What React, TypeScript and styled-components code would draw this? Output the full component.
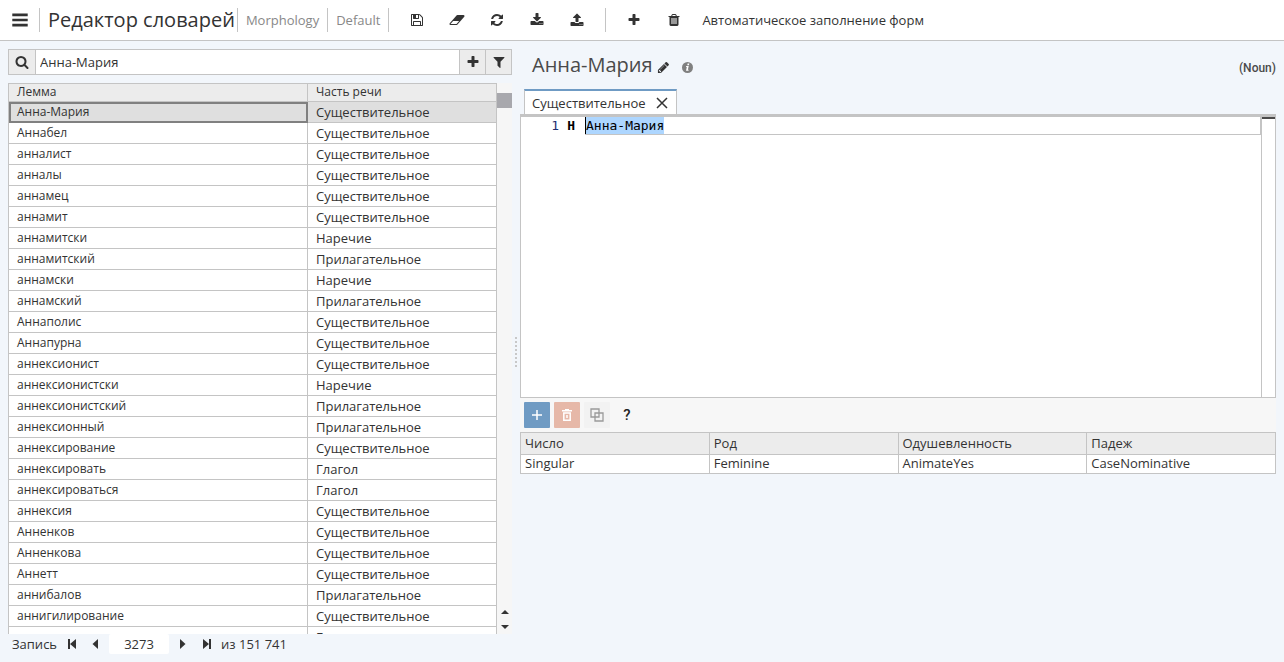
import React, { useState } from 'react';
import styled, { createGlobalStyle, css } from 'styled-components';

const line = '#c4c4c4';
const ink = '#333333';
const page = '#f2f6fb';
const mono = '"DejaVu Sans Mono", "Liberation Mono", monospace';

const GlobalStyle = createGlobalStyle`
  *, *::before, *::after { box-sizing: border-box; }
  body {
    margin: 0;
    background: ${page};
    color: ${ink};
    font-family: "Open Sans", "Liberation Sans", sans-serif;
    font-size: 13px;
    line-height: 18px;
  }
  button, input { font: inherit; color: inherit; }
  button { padding: 0; border: 0; background: none; cursor: pointer; }
`;

const icons = {
  bars: 'M128 1280h1536v256H128zM128 768h1536v256H128zM128 256h1536v256H128z',
  save: 'M512 1536h768v-384h-768v384zm896 0h128v-896q0-14-10-38.5t-20-34.5l-281-281q-10-10-34-20t-39-10v416q0 40-28 68t-68 28h-576q-40 0-68-28t-28-68v-416h-128v1280h128v-416q0-40 28-68t68-28h832q40 0 68 28t28 68v416zm-384-928v-320q0-13-9.5-22.5t-22.5-9.5h-192q-13 0-22.5 9.5t-9.5 22.5v320q0 13 9.5 22.5t22.5 9.5h192q13 0 22.5-9.5t9.5-22.5zm640 32v928q0 40-28 68t-68 28h-1344q-40 0-68-28t-28-68v-1344q0-40 28-68t68-28h928q40 0 88 20t76 48l280 280q28 28 48 76t20 88z',
  eraser: 'M960 1408l336-384h-768l-336 384h768zm1013-1077q15 34 9.5 71.5t-30.5 65.5l-896 1024q-38 44-96 44h-768q-38 0-69.5-20.5t-47.5-54.5q-15-34-9.5-71.5t30.5-65.5l896-1024q38-44 96-44h768q38 0 69.5 20.5t47.5 54.5z',
  refresh: 'M1639 1056q0 5-1 7-64 268-268 434.5t-478 166.5q-146 0-282.5-55t-243.5-157l-129 129q-19 19-45 19t-45-19-19-45v-448q0-26 19-45t45-19h448q26 0 45 19t19 45-19 45l-137 137q71 66 161 102t187 36q134 0 250-65t186-179q11-17 53-117 8-23 30-23h192q13 0 22.5 9.5t9.5 22.5zm25-800v448q0 26-19 45t-45 19h-448q-26 0-45-19t-19-45 19-45l138-138q-148-137-349-137-134 0-250 65t-186 179q-11 17-53 117-8 23-30 23h-199q-13 0-22.5-9.5t-9.5-22.5v-7q65-268 270-434.5t480-166.5q146 0 284 55.5t245 156.5l130-129q19-19 45-19t45 19 19 45z',
  download: 'M1344 1344q0-26-19-45t-45-19-45 19-19 45 19 45 45 19 45-19 19-45zm256 0q0-26-19-45t-45-19-45 19-19 45 19 45 45 19 45-19 19-45zm128-224v320q0 40-28 68t-68 28h-1472q-40 0-68-28t-28-68v-320q0-40 28-68t68-28h465l135 136q58 56 136 56t136-56l136-136h464q40 0 68 28t28 68zm-325-569q17 41-14 70l-448 448q-18 19-45 19t-45-19l-448-448q-31-29-14-70 17-39 59-39h256v-448q0-26 19-45t45-19h256q26 0 45 19t19 45v448h256q42 0 59 39z',
  upload: 'M1344 1472q0-26-19-45t-45-19-45 19-19 45 19 45 45 19 45-19 19-45zm256 0q0-26-19-45t-45-19-45 19-19 45 19 45 45 19 45-19 19-45zm128-224v320q0 40-28 68t-68 28h-1472q-40 0-68-28t-28-68v-320q0-40 28-68t68-28h427q21 56 70.5 92t110.5 36h256q61 0 110.5-36t70.5-92h427q40 0 68 28t28 68zm-325-648q-17 40-59 40h-256v448q0 26-19 45t-45 19h-256q-26 0-45-19t-19-45v-448h-256q-42 0-59-40-17-39 14-69l448-448q18-19 45-19t45 19l448 448q31 30 14 69z',
  plus: 'M1600 736v192q0 40-28 68t-68 28h-416v416q0 40-28 68t-68 28h-192q-40 0-68-28t-28-68v-416h-416q-40 0-68-28t-28-68v-192q0-40 28-68t68-28h416v-416q0-40 28-68t68-28h192q40 0 68 28t28 68v416h416q40 0 68 28t28 68z',
  trash: 'M704 1376v-704q0-14-9-23t-23-9h-64q-14 0-23 9t-9 23v704q0 14 9 23t23 9h64q14 0 23-9t9-23zm256 0v-704q0-14-9-23t-23-9h-64q-14 0-23 9t-9 23v704q0 14 9 23t23 9h64q14 0 23-9t9-23zm256 0v-704q0-14-9-23t-23-9h-64q-14 0-23 9t-9 23v704q0 14 9 23t23 9h64q14 0 23-9t9-23zm-544-992h448l-48-117q-7-9-17-11h-317q-10 2-17 11zm928 32v64q0 14-9 23t-23 9h-96v948q0 83-47 143.5t-113 60.5h-832q-66 0-113-58.5t-47-141.5v-952h-96q-14 0-23-9t-9-23v-64q0-14 9-23t23-9h309l70-167q15-37 54-63t79-26h320q40 0 79 26t54 63l70 167h309q14 0 23 9t9 23z',
  search: 'M1216 832q0-185-131.5-316.5t-316.5-131.5-316.5 131.5-131.5 316.5 131.5 316.5 316.5 131.5 316.5-131.5 131.5-316.5zm512 832q0 52-38 90t-90 38q-54 0-90-38l-343-342q-179 124-399 124-143 0-273.5-55.5t-225-150-150-225-55.5-273.5 55.5-273.5 150-225 225-150 273.5-55.5 273.5 55.5 225 150 150 225 55.5 273.5q0 220-124 399l343 343q37 37 37 90z',
  filter: 'M1595 295q17 41-14 70l-493 493v742q0 42-39 59-13 5-25 5-27 0-45-19l-256-256q-19-19-19-45v-486l-493-493q-31-29-14-70 17-39 59-39h1280q42 0 59 39z',
  pencil: 'M491 1536l91-91-235-235-91 91v107h128v128h107zm523-928q0-22-22-22-10 0-17 7l-542 542q-7 7-7 17 0 22 22 22 10 0 17-7l542-542q7-7 7-17zm-54-192l416 416-832 832h-416v-416zm683 96q0 53-37 90l-166 166-416-416 166-165q36-38 90-38 53 0 91 38l235 234q37 39 37 91z',
  first: 'M384 256h256v640l768-640v1280l-768-640v640h-256z',
  prev: 'M1024 256v1280l-704-640z',
  next: 'M640 256v1280l704-640z',
  last: 'M1408 256h-256v640l-768-640v1280l768-640v640h256z',
} as const;

type IconName = keyof typeof icons;

const Glyph = styled.svg`
  display: block;
  flex: none;
  fill: currentColor;
`;

function Icon({ name, size = 14 }: { name: IconName; size?: number }) {
  const wide = name === 'eraser';
  return (
    <Glyph
      width={wide ? size + 2 : size}
      height={size}
      viewBox={wide ? '0 0 2048 1792' : '0 0 1792 1792'}
      aria-hidden="true"
    >
      <path d={icons[name]} />
    </Glyph>
  );
}

const Shell = styled.div`
  display: flex;
  flex-direction: column;
  height: 100vh;
`;

const TopBar = styled.header`
  display: flex;
  align-items: center;
  flex: none;
  height: 41px;
  background: #ffffff;
  border-bottom: 1px solid ${line};
`;

const MenuButton = styled.button`
  display: flex;
  align-items: center;
  justify-content: center;
  width: 39px;
  height: 40px;

  svg { width: 18px; height: 18px; }
`;

const Crumb = styled.div<{ $main?: boolean }>`
  height: 24px;
  padding: 0 ${(p) => (p.$main ? 2 : 8)}px 0 8px;
  border-left: 1px solid ${line};
  color: ${(p) => (p.$main ? ink : '#888888')};
  font-size: ${(p) => (p.$main ? 20 : 13)}px;
  line-height: 24px;
  white-space: nowrap;
`;

const AppTitle = styled.h1`
  margin: 0;
  font: inherit;
`;

const Tools = styled.div`
  display: flex;
  align-items: center;
  height: 24px;
  border-left: 1px solid ${line};
`;

const ToolButton = styled.button`
  display: flex;
  align-items: center;
  justify-content: center;
  width: 40px;
  height: 24px;
`;

const ToolGroup = styled.div<{ $first?: boolean }>`
  display: flex;
  align-items: center;
  padding: 0 8px;
  height: 24px;
  ${(p) => !p.$first && css`border-left: 1px solid ${line};`}
`;

const TextButton = styled.button`
  padding: 0 8px;
  white-space: nowrap;
`;

const Workspace = styled.main`
  display: grid;
  grid-template-columns: minmax(0, 2fr) 8px minmax(0, 3fr);
  flex: 1;
  min-height: 0;
  padding: 0 8px;
`;

const LeftPane = styled.section`
  display: flex;
  flex-direction: column;
  min-height: 0;
  padding: 8px 0;
`;

const SearchBar = styled.div`
  display: flex;
  flex: none;
  height: 26px;
  border: 1px solid ${line};
  background: #ffffff;
`;

const SearchInput = styled.input`
  flex: 1;
  min-width: 0;
  padding: 0 4px;
  border: 0;
  outline: 0;
  background: transparent;
`;

const SearchButton = styled.button<{ $side: 'left' | 'right' }>`
  display: flex;
  align-items: center;
  justify-content: center;
  width: ${(p) => (p.$side === 'left' ? 27 : 26)}px;
  background: #ececec;
  border-${(p) => (p.$side === 'left' ? 'right' : 'left')}: 1px solid ${line};
`;

const ListArea = styled.div`
  display: flex;
  flex: 1;
  min-height: 0;
  margin-top: 8px;
  overflow: hidden;
`;

const ListClip = styled.div`
  flex: 1;
  min-width: 0;
  overflow: hidden;
  border-left: 1px solid ${line};
  border-top: 1px solid ${line};
`;

const LemmaTable = styled.table`
  width: 100%;
  table-layout: fixed;
  border-collapse: separate;
  border-spacing: 0;
`;

const HeadCell = styled.th`
  height: 18px;
  padding: 0 8px;
  background: #ececec;
  border-right: 1px solid ${line};
  border-bottom: 1px solid ${line};
  font-size: 12px;
  font-weight: 400;
  line-height: 15px;
  text-align: left;
  vertical-align: top;

  &:first-child { width: 299px; }
`;

const Cell = styled.td<{ $selected?: boolean; $lemma?: boolean }>`
  height: 21px;
  padding: 0 8px;
  background: ${(p) => (p.$selected ? '#dfdfdf' : '#ffffff')};
  border-right: 1px solid ${line};
  border-bottom: 1px solid ${line};
  font-size: ${(p) => (p.$lemma ? 12 : 13)}px;
  line-height: 20px;
  vertical-align: top;
  white-space: nowrap;
  ${(p) => p.$selected && p.$lemma && css`
    outline: 2px solid #808080;
    outline-offset: -2px;
  `}
`;

const ScrollTrack = styled.div`
  display: flex;
  flex-direction: column;
  align-items: center;
  flex: none;
  width: 15px;
  padding-top: 10px;
  background: #f6f6f6;
`;

const ScrollThumb = styled.div`
  width: 15px;
  height: 15px;
  margin-bottom: auto;
  background: #a8a8ad;
`;

const ScrollButton = styled.button`
  display: flex;
  align-items: center;
  justify-content: center;
  width: 15px;
  height: 15px;
`;

const Pager = styled.div`
  display: flex;
  align-items: center;
  flex: none;
  height: 20px;
  padding-left: 4px;
`;

const PagerLabel = styled.label`
  padding-right: 2px;
`;

const PagerButton = styled.button`
  display: flex;
  align-items: center;
  justify-content: center;
  width: 25px;
  height: 20px;
`;

const PagerInput = styled.input`
  width: 60px;
  height: 20px;
  padding: 0;
  border: 0;
  border-radius: 2px;
  background: #ffffff;
  text-align: center;
`;

const PagerTotal = styled.span`
  padding-left: 2px;
`;

const Splitter = styled.div`
  display: flex;
  flex-direction: column;
  align-items: center;
  justify-content: center;
  gap: 2px;
`;

const Dot = styled.i`
  width: 2px;
  height: 2px;
  background: #c8c8c8;
`;

const RightPane = styled.section`
  display: flex;
  flex-direction: column;
  min-width: 0;
`;

const EntryHead = styled.div`
  display: flex;
  align-items: center;
  height: 48px;
  padding-left: 12px;
`;

const EntryTitle = styled.h2`
  margin: 0 4px 0 0;
  color: #4a4a4a;
  font-size: 20px;
  font-weight: 400;
  line-height: 28px;
`;

const HeadIcon = styled.button`
  display: flex;
  margin-right: 12px;
  padding-top: 4px;
`;

const PartOfSpeech = styled.span`
  margin-left: auto;
  padding-top: 6px;
  color: #4a4a4a;
  font-family: Roboto, "Liberation Sans", sans-serif;
  font-size: 12px;
  font-weight: 500;
`;

const TabStrip = styled.div`
  display: flex;
  height: 25px;
  padding-left: 4px;
`;

const Tab = styled.div`
  display: flex;
  align-items: center;
  padding: 0 8px 0 7px;
  gap: 10px;
  background: #ffffff;
  border: 1px solid ${line};
  border-top: 2px solid #6f9bc4;
  border-bottom: 0;
`;

const TabLabel = styled.button`
  white-space: nowrap;
`;

const Editor = styled.div`
  display: flex;
  height: 284px;
  background: #ffffff;
  border: 1px solid ${line};
  border-top-width: 3px;
`;

const Gutter = styled.div`
  flex: none;
  width: 64px;
  padding-right: 10px;
  color: #1f2f6f;
  font-family: ${mono};
  line-height: 18px;
  text-align: right;
  white-space: pre;
`;

const GutterMark = styled.b`
  padding-left: 8px;
  color: #000000;
`;

const CodeArea = styled.div`
  flex: 1;
  min-width: 0;
`;

const CodeLine = styled.div`
  display: flex;
  height: 18px;
  border: 1px solid ${line};
  border-top: 0;
`;

const CodeInput = styled.input`
  height: 17px;
  padding: 0;
  border: 0;
  outline: 0;
  background: #add6ff;
  box-shadow: -1px 0 0 #000000;
  color: #000000;
  font-family: ${mono};
`;

const OverviewRuler = styled.div`
  flex: none;
  width: 14px;
  border-left: 1px solid ${line};

  &::before {
    content: "";
    display: block;
    height: 2px;
    background: #4a4a4a;
  }
`;

const FormTools = styled.div`
  display: flex;
  align-items: center;
  gap: 4px;
  height: 34px;
  padding-left: 4px;
  background: #f7f7f7;
`;

const FormButton = styled.button<{ $tone: 'add' | 'remove' | 'copy' | 'help' }>`
  display: flex;
  align-items: center;
  justify-content: center;
  width: 26px;
  height: 26px;
  border-radius: 1px;
  font-family: Roboto, "Liberation Sans", sans-serif;
  font-size: 15px;
  font-weight: 500;
  background: ${(p) => ({ add: '#709bc3', remove: '#e6b8a8', copy: '#f2f2f2', help: 'transparent' })[p.$tone]};
  color: ${(p) => ({ add: '#ffffff', remove: '#ffffff', copy: '#9a9a9a', help: '#222222' })[p.$tone]};
`;

const Stroke = styled.svg`
  display: block;
  fill: none;
  stroke: currentColor;
`;

const FormTable = styled.table`
  width: 100%;
  table-layout: fixed;
  border-collapse: collapse;
  background: #ffffff;
  line-height: 16px;
`;

const FormHead = styled.th`
  height: 22px;
  padding: 0 4px 2px;
  background: #ececec;
  border: 1px solid ${line};
  font-weight: 400;
  text-align: left;
`;

const FormCell = styled.td`
  height: 19px;
  padding: 0 4px 2px;
  border: 1px solid ${line};
`;

const noun = 'Существительное';
const adjective = 'Прилагательное';
const adverb = 'Наречие';
const verb = 'Глагол';

const lemmas: [string, string][] = [
  ['Анна-Мария', noun],
  ['Аннабел', noun],
  ['анналист', noun],
  ['анналы', noun],
  ['аннамец', noun],
  ['аннамит', noun],
  ['аннамитски', adverb],
  ['аннамитский', adjective],
  ['аннамски', adverb],
  ['аннамский', adjective],
  ['Аннаполис', noun],
  ['Аннапурна', noun],
  ['аннексионист', noun],
  ['аннексионистски', adverb],
  ['аннексионистский', adjective],
  ['аннексионный', adjective],
  ['аннексирование', noun],
  ['аннексировать', verb],
  ['аннексироваться', verb],
  ['аннексия', noun],
  ['Анненков', noun],
  ['Анненкова', noun],
  ['Аннетт', noun],
  ['аннибалов', adjective],
  ['аннигилирование', noun],
  ['', verb],
];

const fileTools: { icon: IconName; label: string }[] = [
  { icon: 'save', label: 'Сохранить' },
  { icon: 'eraser', label: 'Очистить' },
  { icon: 'refresh', label: 'Обновить' },
  { icon: 'download', label: 'Импорт' },
  { icon: 'upload', label: 'Экспорт' },
];

const forms = [
  { head: 'Число', value: 'Singular' },
  { head: 'Род', value: 'Feminine' },
  { head: 'Одушевленность', value: 'AnimateYes' },
  { head: 'Падеж', value: 'CaseNominative' },
];

export default function App() {
  const [query, setQuery] = useState('Анна-Мария');
  const [record, setRecord] = useState('3273');
  const [code, setCode] = useState('Анна-Мария');

  return (
    <Shell>
      <GlobalStyle />
      <TopBar>
        <MenuButton aria-label="Меню"><Icon name="bars" /></MenuButton>
        <Crumb $main><AppTitle>Редактор словарей</AppTitle></Crumb>
        <Crumb>Morphology</Crumb>
        <Crumb>Default</Crumb>
        <Tools>
          <ToolGroup $first>
            {fileTools.map((tool) => (
              <ToolButton key={tool.icon} aria-label={tool.label}><Icon name={tool.icon} /></ToolButton>
            ))}
          </ToolGroup>
          <ToolGroup>
            <ToolButton aria-label="Добавить"><Icon name="plus" /></ToolButton>
            <ToolButton aria-label="Удалить"><Icon name="trash" /></ToolButton>
            <TextButton>Автоматическое заполнение форм</TextButton>
          </ToolGroup>
        </Tools>
      </TopBar>

      <Workspace>
        <LeftPane>
          <SearchBar>
            <SearchButton $side="left" aria-label="Найти"><Icon name="search" /></SearchButton>
            <SearchInput aria-label="Поиск леммы" value={query} onChange={(e) => setQuery(e.target.value)} />
            <SearchButton $side="right" aria-label="Добавить лемму"><Icon name="plus" /></SearchButton>
            <SearchButton $side="right" aria-label="Фильтр"><Icon name="filter" /></SearchButton>
          </SearchBar>

          <ListArea>
            <ListClip>
              <LemmaTable>
                <thead>
                  <tr>
                    <HeadCell>Лемма</HeadCell>
                    <HeadCell>Часть речи</HeadCell>
                  </tr>
                </thead>
                <tbody>
                  {lemmas.map(([lemma, part], index) => (
                    <tr key={index}>
                      <Cell $lemma $selected={index === 0}>{lemma}</Cell>
                      <Cell $selected={index === 0}>{part}</Cell>
                    </tr>
                  ))}
                </tbody>
              </LemmaTable>
            </ListClip>
            <ScrollTrack>
              <ScrollThumb />
              <ScrollButton aria-label="Вверх">
                <Glyph width="8" height="4" viewBox="0 0 8 4"><path d="M0 4L4 0L8 4z" /></Glyph>
              </ScrollButton>
              <ScrollButton aria-label="Вниз">
                <Glyph width="8" height="4" viewBox="0 0 8 4"><path d="M0 0L4 4L8 0z" /></Glyph>
              </ScrollButton>
            </ScrollTrack>
          </ListArea>

          <Pager>
            <PagerLabel htmlFor="record">Запись</PagerLabel>
            <PagerButton aria-label="Первая"><Icon name="first" /></PagerButton>
            <PagerButton aria-label="Предыдущая"><Icon name="prev" /></PagerButton>
            <PagerInput id="record" value={record} onChange={(e) => setRecord(e.target.value)} />
            <PagerButton aria-label="Следующая"><Icon name="next" /></PagerButton>
            <PagerButton aria-label="Последняя"><Icon name="last" /></PagerButton>
            <PagerTotal>из 151 741</PagerTotal>
          </Pager>
        </LeftPane>

        <Splitter>
          {Array.from({ length: 8 }, (_, i) => <Dot key={i} />)}
        </Splitter>

        <RightPane>
          <EntryHead>
            <EntryTitle>Анна-Мария</EntryTitle>
            <HeadIcon aria-label="Изменить"><Icon name="pencil" size={13} /></HeadIcon>
            <HeadIcon aria-label="Сведения">
              <Glyph width="11" height="11" viewBox="0 0 11 11">
                <circle cx="5.5" cy="5.5" r="5.5" fill="#808080" />
                <path d="M5.6 1.6h1.7l-.3 1.6H5.3zM4.2 4h2.5l-.8 3.7h.8l-.2 1H4l.8-3.700H4z" fill="#ffffff" />
              </Glyph>
            </HeadIcon>
            <PartOfSpeech>(Noun)</PartOfSpeech>
          </EntryHead>

          <TabStrip>
            <Tab>
              <TabLabel>{noun}</TabLabel>
              <button aria-label="Закрыть">
                <Stroke width="12" height="12" viewBox="0 0 12 12" strokeWidth="1.5">
                  <path d="M1 1L11 11M11 1L1 11" />
                </Stroke>
              </button>
            </Tab>
          </TabStrip>

          <Editor>
            <Gutter>1<GutterMark>Н</GutterMark></Gutter>
            <CodeArea>
              <CodeLine>
                <CodeInput
                  aria-label="Формы"
                  value={code}
                  onChange={(e) => setCode(e.target.value)}
                  style={{ width: `${code.length}ch` }}
                />
              </CodeLine>
            </CodeArea>
            <OverviewRuler />
          </Editor>

          <FormTools>
            <FormButton $tone="add" aria-label="Добавить форму">
              <Stroke width="12" height="12" viewBox="0 0 12 12" strokeWidth="1.5"><path d="M6 1V11M1 6H11" /></Stroke>
            </FormButton>
            <FormButton $tone="remove" aria-label="Удалить форму">
              <Stroke width="12" height="12" viewBox="0 0 12 12" strokeWidth="1.5">
                <path d="M1 1.8H11M4 .8H8M2.8 4H9.2V11.2H2.8zM6 6V9" />
              </Stroke>
            </FormButton>
            <FormButton $tone="copy" aria-label="Копировать форму">
              <Stroke width="14" height="14" viewBox="0 0 14 14" strokeWidth="1.3">
                <path d="M1 1H9V9H1zM5 5H13V13H5z" />
              </Stroke>
            </FormButton>
            <FormButton $tone="help" aria-label="Справка">?</FormButton>
          </FormTools>

          <FormTable>
            <thead>
              <tr>{forms.map((f) => <FormHead key={f.head}>{f.head}</FormHead>)}</tr>
            </thead>
            <tbody>
              <tr>{forms.map((f) => <FormCell key={f.head}>{f.value}</FormCell>)}</tr>
            </tbody>
          </FormTable>
        </RightPane>
      </Workspace>
    </Shell>
  );
}
